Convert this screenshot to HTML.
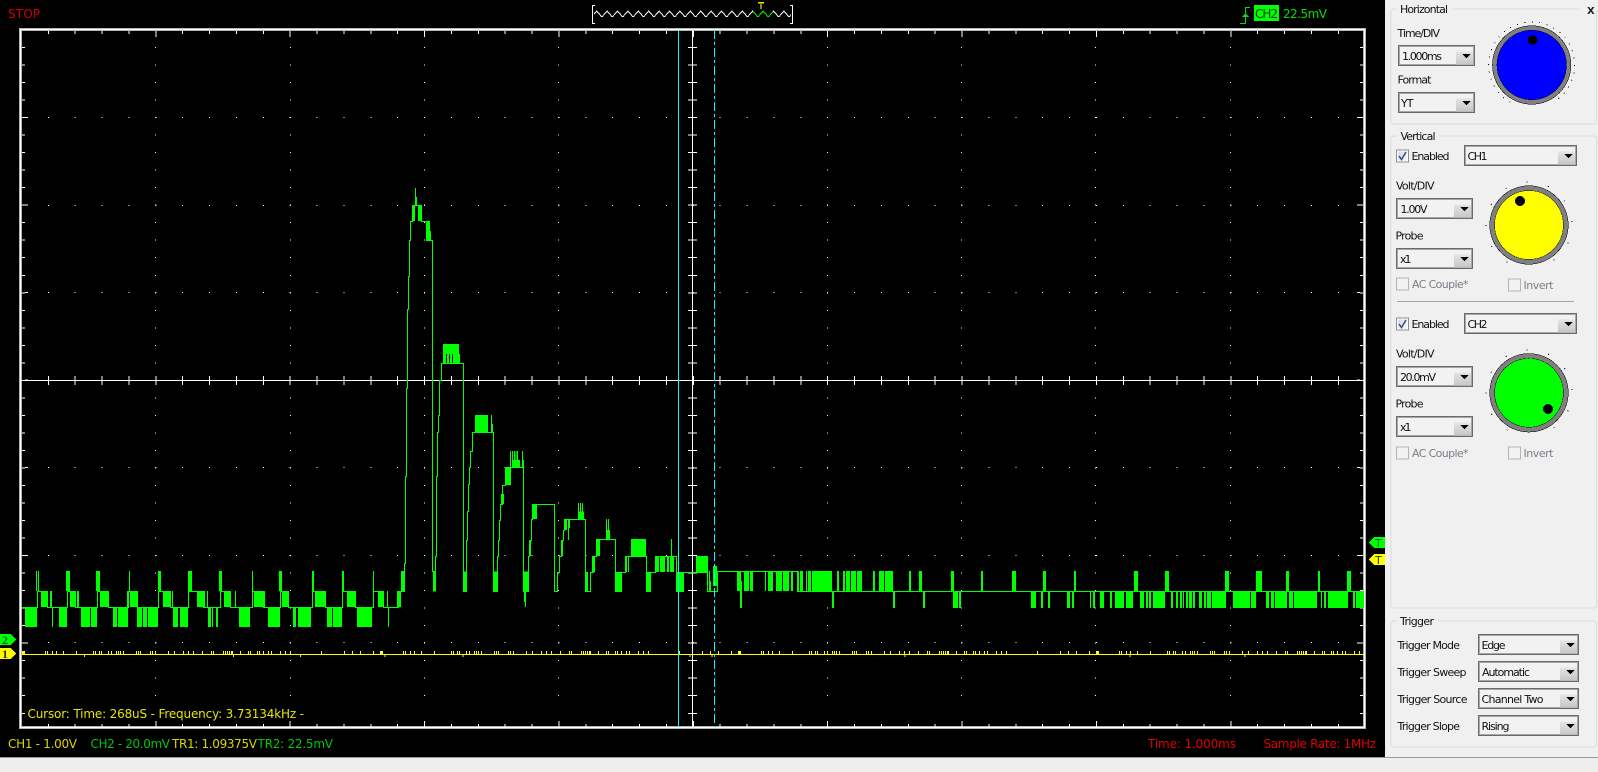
<!DOCTYPE html>
<html>
<head>
<meta charset="utf-8">
<title>Oscilloscope</title>
<style>
html,body{margin:0;padding:0;background:#000;width:1598px;height:772px;overflow:hidden}
svg{display:block;shape-rendering:crispEdges}
text{font-family:"DejaVu Sans","Liberation Sans",sans-serif;font-size:11px;fill:#111;shape-rendering:auto}
.s text,text.s{font-size:12px}
</style>
</head>
<body>
<svg xmlns="http://www.w3.org/2000/svg" width="1598" height="772" viewBox="0 0 1598 772">
<defs>
<linearGradient id="bg" x1="0" y1="0" x2="0" y2="1"><stop offset="0" stop-color="#e4e4e4"/><stop offset="1" stop-color="#c6c6c6"/></linearGradient>
<linearGradient id="cb" x1="0" y1="0" x2="1" y2="1"><stop offset="0" stop-color="#d4d9e2"/><stop offset="1" stop-color="#f6f7fa"/></linearGradient>
<g id="btn"><rect x="0" y="0" width="17" height="13" fill="url(#bg)"/><polygon points="6.5,2.5 14.5,2.5 10.5,7" fill="#000"/></g>
<g id="chk"><rect x="0.5" y="0.5" width="12" height="12" fill="#fff" stroke="#8e8f8f"/><rect x="2" y="2" width="9" height="9" fill="url(#cb)"/><path d="M3 6.5L5.5 10L10 2.5" fill="none" stroke="#3f5595" stroke-width="1.6" style="shape-rendering:auto"/></g>
<g id="unc"><rect x="0.5" y="0.5" width="12" height="12" fill="#f2f2f2" stroke="#b4b4b4"/></g>
<pattern id="zw" patternUnits="userSpaceOnUse" x="591.5" y="9" width="10.4" height="10"><polyline points="0,8 5.2,2 10.4,8" fill="none" stroke="#fff" stroke-width="1"/></pattern>
<pattern id="zg" patternUnits="userSpaceOnUse" x="591.5" y="9" width="10.4" height="10"><polyline points="0,8 5.2,2 10.4,8" fill="none" stroke="#00ff00" stroke-width="1"/></pattern>
</defs>

<rect x="0" y="0" width="1598" height="772" fill="#000"/>

<!-- STOP -->
<text x="8" y="18" class="s" style="fill:#d00000" textLength="32">STOP</text>

<!-- timeline -->
<path d="M595 5.5H592.5V23.5H595M790 5.5H792.5V23.5H790" fill="none" stroke="#fff"/>
<rect x="594" y="9" width="197" height="10" fill="url(#zw)"/>
<rect x="753" y="9" width="20" height="10" fill="#000"/>
<rect x="753" y="9" width="20" height="10" fill="url(#zg)"/>
<rect x="758" y="2" width="6" height="1.5" fill="#e8e800"/>
<rect x="760" y="3" width="2" height="6" fill="#8a8a00"/>

<!-- trigger info -->
<path d="M1250 7.5H1245.5V23.5H1240" fill="none" stroke="#00e000"/>
<polygon points="1245.5,13 1249,17 1242,17" fill="#00e000"/>
<rect x="1254" y="5" width="25" height="16" fill="#00ff00"/>
<text x="1255" y="18" class="s" style="fill:#0a3a0a" textLength="23">CH2</text>
<text x="1283" y="18" class="s" style="fill:#00e000" textLength="44">22.5mV</text>

<!-- frame -->
<rect x="20.5" y="29.5" width="1344" height="698" fill="none" stroke="#b4b4b4" stroke-width="3"/>
<rect x="20.5" y="29.5" width="1344" height="698" fill="none" stroke="#fff" stroke-width="1"/>

<!-- ticks -->
<g fill="none" stroke="#fff">
<path d="M47.8 32.5H1362" stroke-width="3" stroke-dasharray="1 25.875"/>
<path d="M155.3 35.5H1362" stroke-width="3" stroke-dasharray="1 133.375"/>
<path d="M47.8 725.5H1362" stroke-width="3" stroke-dasharray="1 25.875"/>
<path d="M155.3 722.5H1362" stroke-width="3" stroke-dasharray="1 133.375"/>
<path d="M23.5 47V716" stroke-width="3" stroke-dasharray="1 16.52"/>
<path d="M26.5 117V716" stroke-width="3" stroke-dasharray="1 86.55"/>
<path d="M1361.5 47V716" stroke-width="3" stroke-dasharray="1 16.52"/>
<path d="M1358.5 117V716" stroke-width="3" stroke-dasharray="1 86.55"/>
<path d="M155.5 47V712M290.5 47V712M424.5 47V712M558.5 47V712M827.5 47V712M961.5 47V712M1095.5 47V712M1230.5 47V712" stroke-width="1" stroke-dasharray="1 16.52"/>
<path d="M47.8 117.5H1340M47.8 205.5H1340M47.8 292.5H1340M47.8 467.5H1340M47.8 555.5H1340M47.8 642.5H1340" stroke-width="1" stroke-dasharray="1 25.875"/>
<path d="M692.5 47V716" stroke-width="9" stroke-dasharray="1 16.52"/>
<path d="M47.8 380.5H1340" stroke-width="9" stroke-dasharray="1 25.875"/>
<path d="M692.5 30V727M21 380.5H1364" stroke-width="1"/>
</g>

<!-- yellow trace -->
<path d="M22 654.5H1364" stroke="#ffff00" stroke-width="1.4" fill="none"/>
<path d="M22 652.5H1364" stroke="#ffff00" stroke-width="3" fill="none" stroke-dasharray="3 20 1 1 1 4 1 3 1 6 1 12 1 16 1 1 1 3 1 1 1 6 1 2 1 4 1 1 1 1 1 2 1 12 1 1 1 1 1 9 1 1 1 2 1 12 1 5 1 8 1 4 1 4 1 8 1 8 1 1 1 9 1 1 1 1 1 1 1 1 2 7 1 7 1 1 1 6 1 1 1 3 1 4 1 2 1 8 1 4 1 4 1 30 1 22 1 7 1 7 1 12 1 6"/>
<path d="M84.5 655V657M233.5 655V657M300.5 655V657M385 655V657M463 655V657M690 655V657M712 655V657M905 655V657M1130 655V657M1245 655V657" stroke="#ffff00" fill="none"/>

<!-- green wave fills -->
<g fill="none" stroke="#00ff00">
<path stroke-width="20" d="M36 581H37M38 581H39M66 581H70M96 581H100M129 581H130M158 581H161M188 581H192M219 581H222M252 581H253M279 581H282M312 581H314M342 581H344M373 581H374M401 581H405M433 581.5H436M463 581.5H467M493 581.5H497M523 581.5H528M585 582H588M615 582H621M646 582H650M676 582H684
M737 581H741M744 581H749M750 581H753M765 581H766M768 581H773M776 581H782M783 581H789M791 581H793M797 581H799M800 581H803M806 581H807M808 581H811M812 581H832M837 581H839M843 581H845M846 581H850M851 581H856M857 581H862M873 581H875M879 581H884M885 581H893M909 581H911M919 581H922M951 581H954M981 581H983M1012 581H1016M1043 581H1046M1074 581H1076M1134 581H1138M1165 581H1169M1225 581H1229M1256 581H1262M1286 581H1289M1318 581H1320M1347 581H1351"/>
<path stroke-width="16" d="M41 599H47M50 599H52M70 599H75M77 599H79M100 599H108M127 599H128M130 599H137M163 599H170M172 599H173M197 599H205M207 599H208M224 599H231M235 599H236M254 599H265M282 599H288M315 599H325M347 599H355M378 599H383M387 599H388M397 599H401"/>
<path stroke-width="20" d="M25 617H37M52 617H53M59 617H62M62 617H67M81 617H86M86 617H90M91 617H97M113 617H117M118 617H128M137 617H142M143 617H147M148 617H158M173 617H178M180 617H188M208 617H211M212 617H213M216 617H218M239 617H250M268 617H280M293 617H296M298 617H311M327 617H332M333 617H342M357 617H372"/>
<!-- step fills on pulses -->
<path stroke-width="16" d="M412 213H415M418 213H421"/>
<path stroke-width="1" d="M415.500 188V205M416.500 197V205"/>
<path stroke-width="19" d="M426 230.5H430"/>
<path stroke-width="9" d="M430 235.5H431"/>
<path stroke-width="19" d="M443 353.5H459"/>
<path stroke-width="9" d="M459 358.500H460"/>
<path stroke-width="9" stroke="#000" d="M446 358.500H447M449 358.500H450M452 358.500H453"/>
<path stroke-width="17" d="M475 423.5H488"/>
<path stroke-width="8" d="M491 428H493"/>
<path stroke-width="1" d="M491.5 415V424M510.5 451V467M512.5 451V467M514.5 451V467M516 451V467M517.5 451V467M522.5 451V467M525.5 592V607M578.5 503V519M580.5 503V519M582.5 503V519M606.5 519V539M608.5 519V539M671.5 539V556M628.5 556V572M568.5 520V540M388.5 607V627"/>
<path stroke-width="10" d="M501 499H504"/>
<path stroke-width="18" d="M505 476H511"/>
<path stroke-width="7" d="M512 463.5H520M523 463.5H524"/>
<path stroke-width="10" d="M524 597H526"/>
<path stroke-width="16" d="M529 548H531"/>
<path stroke-width="15" d="M532 511.5H537"/>
<path stroke-width="16" d="M561 548H563"/>
<path stroke-width="10" d="M563 535H564"/>
<path stroke-width="11" d="M564 524.5H567"/>
<path stroke-width="8" d="M568 524H570M578 515.5H584"/>
<path stroke-width="16" d="M592 564H595M596.5 548H600"/>
<path stroke-width="9" d="M606 534.5H610"/>
<path stroke-width="17" d="M631 547.5H646"/>
<path stroke-width="16" d="M625 564H627M655 564H659M660 564H665M667 564H669M670 564H674M696 564H708"/>
<path stroke-width="20" d="M709 581H710M713 576H717"/>
<path stroke-width="10" d="M710 586H711M741 586H742"/>
<path stroke-width="17" d="M740 599.5H742M832 599.5H834M893 599.5H895M923 599.5H925M953 599.5H958M959 599.5H961M1031 599.5H1036M1041 599.5H1043M1048 599.5H1050M1067 599.5H1070M1072 599.5H1074M1090 599.5H1091M1093 599.5H1095M1100 599.5H1104M1110 599.5H1112M1115 599.5H1124M1126 599.5H1133M1140 599.5H1144M1146 599.5H1148M1149 599.5H1151M1153 599.5H1165M1171 599.5H1173M1176 599.5H1178M1180 599.5H1182M1183 599.5H1184M1186 599.5H1188M1189 599.5H1192M1193 599.5H1195M1199 599.5H1202M1204 599.5H1206M1207 599.5H1211M1212 599.5H1226M1233 599.5H1250M1251 599.5H1256M1266 599.5H1269M1271 599.5H1274M1275 599.5H1277M1277 599.5H1287M1289 599.5H1293M1294 599.5H1317M1321 599.5H1322M1324 599.5H1326M1328 599.5H1348M1353 599.5H1355M1356 599.5H1364"/>
<!-- main trace line -->
<path stroke-width="1" d="M22 607.5H37.5V591.5H47.5V607.5H67.5V591.5H75.5V607.5H97.5V591.5H108.5V607.5H128.5V591.5H137.5V607.5H158.5V591.5H170.5V607.5H188.5V591.5H203.5V607.5H220.5V591.5H230.5V607.5H252.5V591.5H263.5V607.5H280.5V591.5H288.5V607.5H312.5V591.5H325.5V607.5H342.5V591.5H355.5V607.5H373.5V591.5H383.5V607.5H398.5V591.5H404.5V563.5H405.5V476.5H406.5V388.5H407.5V309.5H408.5V276.5H409.5V240.5H410.5V221.5H412.5V205.5H421.5V221.5H426.5V240.5H432.5V571.5H435.5V556.5H436.5V476.5H437.5V432.5H438.5V415.5H439.5V380.5H441.5V363.5H463.5V591.5H466.5V540.5H467.5V511.5H468.5V484.5H469.5V467.5H470.5V451.5H472.5V432.5H493.5V591.5H497.5V556.5H498.5V540.5H499.5V520.5H500.5V504.5H502.5V485.5H505.5V467.5H523.5V591.5H528.5V556.5H529.5V540.5H531.5V519.5H532.5V504.5H554.5V591.5H557.5V572.5H559.5V556.5H561.5V540.5H563.5V530.5H564.5V519.5H585.5V591.5H590.5V572.5H593.5V556.5H596.5V539.5H615.5V591.5H621.5V572.5H625.5V556.5H646.5V591.5H650.5V572.5H655.5V556.5H676.5V572.5H707.5V591.5H717.5V571.5H797.5V591.5H1364"/>
</g>

<!-- cursors -->
<path d="M678.5 30V727" stroke="#00ffff" fill="none"/>
<path d="M714.5 30V727" stroke="#00ffff" fill="none" stroke-dasharray="9 3 3 3"/>

<!-- channel markers -->
<polygon points="0,634 11,634 16,639.5 11,645 0,645" fill="#00ff00"/>
<polygon points="0,648 11,648 16,653.5 11,659 0,659" fill="#ffff00"/>
<text x="2" y="644" style="font-family:'Liberation Serif',serif;font-size:12px;font-weight:bold;fill:#063">2</text>
<text x="2" y="658" style="font-family:'Liberation Serif',serif;font-size:12px;font-weight:bold;fill:#330">1</text>
<polygon points="1385,537 1374,537 1369,542.5 1374,548 1385,548" fill="#00ff00"/>
<polygon points="1385,554 1374,554 1369,559.5 1374,565 1385,565" fill="#ffff00"/>
<text x="1375" y="547" style="font-size:11px;fill:#063">T</text>
<text x="1375" y="564" style="font-size:11px;fill:#330">T</text>

<!-- cursor text and status -->
<text x="27.5" y="718" class="s" style="fill:#e6e600" textLength="276.5">Cursor: Time: 268uS - Frequency: 3.73134kHz -</text>
<text x="8" y="748" class="s" style="fill:#d8d800" textLength="69">CH1 - 1.00V</text>
<text x="90.5" y="748" class="s" style="fill:#00c800" textLength="79.5">CH2 - 20.0mV</text>
<text x="172" y="748" class="s" style="fill:#d8d800" textLength="85">TR1: 1.09375V</text>
<text x="257.5" y="748" class="s" style="fill:#00c800" textLength="75.5">TR2: 22.5mV</text>
<text x="1148" y="748" class="s" style="fill:#e00000" textLength="88">Time: 1.000ms</text>
<text x="1263.5" y="748" class="s" style="fill:#e00000" textLength="112.5">Sample Rate: 1MHz</text>

<!-- bottom bar -->
<rect x="0" y="757" width="1598" height="1" fill="#9a9a9a"/>
<rect x="0" y="758" width="1598" height="14" fill="#f0eded"/>

<!-- panel -->
<rect x="1385" y="0" width="213" height="757" fill="#f0f0f0"/>
<g fill="none" stroke="#d8dde3">
<rect x="1391" y="9" width="205.5" height="115" rx="3"/>
<rect x="1391" y="136" width="205.5" height="472" rx="3"/>
<rect x="1391" y="621" width="205.5" height="126" rx="3"/>
</g>
<rect x="1397" y="5" width="55" height="9" fill="#f0f0f0"/>
<rect x="1397" y="131" width="42" height="10" fill="#f0f0f0"/>
<rect x="1397" y="616" width="41" height="10" fill="#f0f0f0"/>
<rect x="1580" y="5" width="16" height="12" fill="#f0f0f0"/>
<text x="1400" y="13" textLength="48">Horizontal</text>
<text x="1400.5" y="140" textLength="35">Vertical</text>
<text x="1400" y="625" textLength="34">Trigger</text>
<text x="1587" y="14" style="font-size:10px;font-weight:bold;fill:#222" textLength="7.5">X</text>

<!-- horizontal -->
<text x="1397.5" y="37" textLength="42.5">Time/DIV</text>
<g fill="#f2f2f2" stroke="#6a6a6a"><rect x="1398.5" y="45.5" width="76" height="20"/><rect x="1398.5" y="92.5" width="76" height="20"/></g>
<g fill="none" stroke="#a8a8a8"><rect x="1399.5" y="46.5" width="74" height="18"/><rect x="1399.5" y="93.5" width="74" height="18"/></g>
<use href="#btn" x="1456" y="51.5"/><use href="#btn" x="1456" y="98.5"/>
<text x="1402" y="60" textLength="40">1.000ms</text>
<text x="1397.5" y="83.5" textLength="34">Format</text>
<text x="1401" y="107" textLength="12.5">YT</text>

<!-- knobs -->
<path d="M1510.2 102.2A43 43 0 1 1 1553.2 102.2" fill="none" stroke="#000" stroke-width="1" stroke-dasharray="1 6.5"/>
<circle cx="1531.7" cy="65" r="39.5" fill="#000"/>
<circle cx="1531.7" cy="65" r="39" fill="#808080"/>
<circle cx="1531.7" cy="65" r="35" fill="#000"/>
<circle cx="1531.7" cy="65" r="34.6" fill="#0000ff"/>
<circle cx="1532.7" cy="40" r="4.8" fill="#000"/>

<path d="M1507.5 262.2A43 43 0 1 1 1550.5 262.2" fill="none" stroke="#000" stroke-width="1" stroke-dasharray="1 21"/>
<circle cx="1529" cy="225" r="39.5" fill="#000"/>
<circle cx="1529" cy="225" r="39" fill="#808080"/>
<circle cx="1529" cy="225" r="34.6" fill="#000"/>
<circle cx="1529" cy="225" r="34.2" fill="#ffff00"/>
<circle cx="1520" cy="201" r="5" fill="#000"/>

<path d="M1507.5 430A43 43 0 1 1 1550.5 430" fill="none" stroke="#000" stroke-width="1" stroke-dasharray="1 21"/>
<circle cx="1529" cy="392.8" r="39.5" fill="#000"/>
<circle cx="1529" cy="392.8" r="39" fill="#808080"/>
<circle cx="1529" cy="392.8" r="34.6" fill="#000"/>
<circle cx="1529" cy="392.8" r="34.2" fill="#00ff00"/>
<circle cx="1548" cy="409" r="5" fill="#000"/>

<!-- vertical CH1 -->
<use href="#chk" x="1396" y="149.5"/>
<text x="1411.5" y="160" textLength="38">Enabled</text>
<g fill="#f2f2f2" stroke="#6a6a6a">
<rect x="1464.5" y="145.5" width="112" height="20"/>
<rect x="1396.5" y="198.5" width="76" height="20"/>
<rect x="1396.5" y="248.5" width="76" height="20"/>
<rect x="1464.5" y="313.5" width="112" height="20"/>
<rect x="1396.5" y="366.5" width="76" height="20"/>
<rect x="1396.5" y="416.5" width="76" height="20"/>
<rect x="1478.5" y="634.5" width="100" height="20"/>
<rect x="1478.5" y="661.5" width="100" height="20"/>
<rect x="1478.5" y="688.5" width="100" height="20"/>
<rect x="1478.5" y="715.5" width="100" height="20"/>
</g>
<g fill="none" stroke="#a8a8a8">
<rect x="1465.5" y="146.5" width="110" height="18"/>
<rect x="1397.5" y="199.5" width="74" height="18"/>
<rect x="1397.5" y="249.5" width="74" height="18"/>
<rect x="1465.5" y="314.5" width="110" height="18"/>
<rect x="1397.5" y="367.5" width="74" height="18"/>
<rect x="1397.5" y="417.5" width="74" height="18"/>
<rect x="1479.5" y="635.5" width="98" height="18"/>
<rect x="1479.5" y="662.5" width="98" height="18"/>
<rect x="1479.5" y="689.5" width="98" height="18"/>
<rect x="1479.5" y="716.5" width="98" height="18"/>
</g>
<use href="#btn" x="1558" y="151.5"/>
<use href="#btn" x="1454" y="204.5"/>
<use href="#btn" x="1454" y="254.5"/>
<use href="#btn" x="1558" y="319.5"/>
<use href="#btn" x="1454" y="372.5"/>
<use href="#btn" x="1454" y="422.5"/>
<use href="#btn" x="1560" y="640.5"/>
<use href="#btn" x="1560" y="667.5"/>
<use href="#btn" x="1560" y="694.5"/>
<use href="#btn" x="1560" y="721.5"/>

<text x="1467.5" y="160" textLength="20">CH1</text>
<text x="1396" y="189.5" textLength="38.5">Volt/DIV</text>
<text x="1400.5" y="213" textLength="27">1.00V</text>
<text x="1395.5" y="239.5" textLength="28">Probe</text>
<text x="1400" y="263" textLength="11.5">x1</text>
<use href="#unc" x="1396" y="277.5"/>
<text x="1412" y="288" style="fill:#7c7c88" textLength="56.5">AC Couple*</text>
<use href="#unc" x="1508" y="278.5"/>
<text x="1523.5" y="289" style="fill:#7c7c88" textLength="30">Invert</text>

<rect x="1397" y="301" width="177" height="1" fill="#a6a6a6"/>

<!-- vertical CH2 -->
<use href="#chk" x="1396" y="317.5"/>
<text x="1411.5" y="328" textLength="38">Enabled</text>
<text x="1467.5" y="328" textLength="20">CH2</text>
<text x="1396" y="357.5" textLength="38.5">Volt/DIV</text>
<text x="1400" y="381" textLength="36">20.0mV</text>
<text x="1395.5" y="407.5" textLength="28">Probe</text>
<text x="1400" y="431" textLength="11.5">x1</text>
<use href="#unc" x="1396" y="446.5"/>
<text x="1412" y="457" style="fill:#7c7c88" textLength="56.5">AC Couple*</text>
<use href="#unc" x="1508" y="446.5"/>
<text x="1523.5" y="457" style="fill:#7c7c88" textLength="30">Invert</text>

<!-- trigger -->
<text x="1397.5" y="649" textLength="62.5">Trigger Mode</text>
<text x="1397.5" y="676" textLength="69">Trigger Sweep</text>
<text x="1397.5" y="703" textLength="70">Trigger Source</text>
<text x="1397.5" y="730" textLength="62.5">Trigger Slope</text>
<text x="1481.5" y="649" textLength="24">Edge</text>
<text x="1482" y="676" textLength="48">Automatic</text>
<text x="1481.5" y="703" textLength="62">Channel Two</text>
<text x="1481.5" y="730" textLength="28">Rising</text>
</svg>
</body>
</html>
